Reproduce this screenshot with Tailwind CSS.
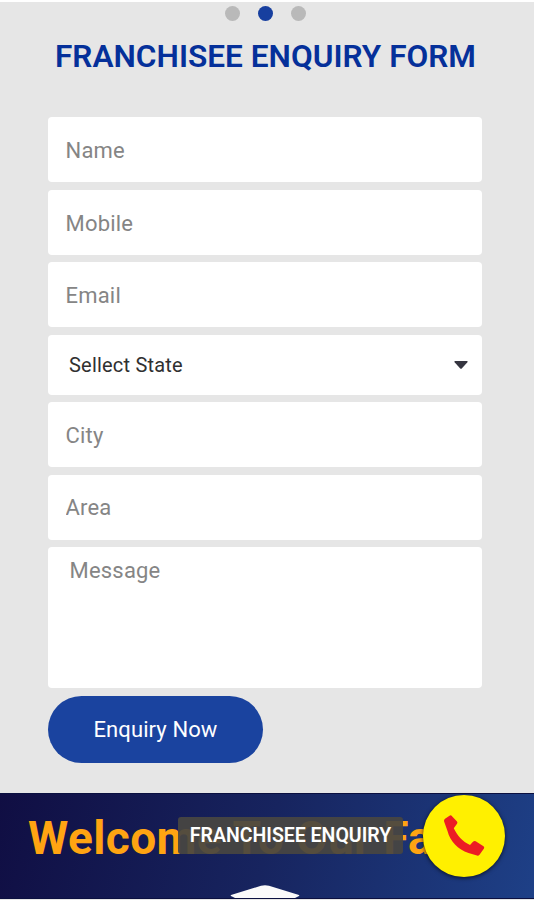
<!DOCTYPE html>
<html lang="en">
<head>
  <meta charset="UTF-8" />
  <meta name="viewport" content="width=device-width, initial-scale=1" />
  <title>Franchisee Enquiry Form</title>
  <script src="https://cdn.jsdelivr.net/npm/@tailwindcss/browser@4"></script>
</head>
<body class="bg-[#e6e6e6] font-[Roboto,sans-serif]">

<div class="relative flex flex-col h-[900px] overflow-hidden border-t-2 border-white">
  <!-- Slider dots -->
  <div class="flex justify-center gap-[18px] pt-1 pr-[3px]">
    <span class="size-[15px] rounded-full bg-[#b9b9b9]"></span>
    <span class="size-[15px] rounded-full bg-[#173f9f]"></span>
    <span class="size-[15px] rounded-full bg-[#b9b9b9]"></span>
  </div>

  <h1 class="mt-4 h-10 pr-[3px] text-center text-[31.6px] leading-10 font-semibold whitespace-nowrap text-[#05309a]">FRANCHISEE ENQUIRY FORM</h1>

  <!-- Enquiry form -->
  <form class="mt-10 ml-12 w-[434px] flex flex-col text-[22px] tracking-[0.2px]">
    <input type="text" placeholder="Name" class="h-[65px] mb-2 px-[17.5px] pt-px rounded-[4px] bg-white placeholder:text-[#858585] outline-none" />
    <input type="text" placeholder="Mobile" class="h-[65px] mb-[7px] px-[17.5px] pt-px rounded-[4px] bg-white placeholder:text-[#858585] outline-none" />
    <input type="text" placeholder="Email" class="h-[65px] mb-2 px-[17.5px] pt-px rounded-[4px] bg-white placeholder:text-[#858585] outline-none" />
    <div class="flex items-center justify-between h-[60px] mb-[7px] pl-[21px] pr-[14px] rounded-[4px] bg-white text-[20px] text-[#303030]">
      <span class="-mt-px">Sellect State</span>
      <svg class="w-[14px] h-2" viewBox="0 0 14 8"><path d="M1 0h12q1 .5.4 1.300L8 7.200q-1 1-2 0L.6 1.300Q0 .5 1 0z" fill="#353540" /></svg>
    </div>
    <input type="text" placeholder="City" class="h-[65px] mb-2 px-[17.5px] pt-px rounded-[4px] bg-white placeholder:text-[#858585] outline-none" />
    <input type="text" placeholder="Area" class="h-[65px] mb-[7px] px-[17.5px] rounded-[4px] bg-white placeholder:text-[#858585] outline-none" />
    <textarea placeholder="Message" class="h-[141px] mb-2 px-[21.5px] py-2 rounded-[4px] bg-white leading-8 placeholder:text-[#858585] outline-none resize-none"></textarea>
    <button type="button" class="w-[215px] h-[67px] rounded-full bg-[#1a439f] text-white tracking-[0.1px]">Enquiry Now</button>
  </form>

  <!-- Welcome banner -->
  <section class="relative mt-[30px] h-[106px] overflow-hidden bg-linear-[105deg] from-[#100e43] via-[#17245f] to-[#1e4087] border-y border-[#0b1040]">
    <h2 class="pl-7 pt-[16px] text-[46px] leading-[56px] tracking-[0.4px] font-bold whitespace-nowrap text-[#ffa412]">Welcome To Our Fa</h2>
    <svg class="absolute left-[230px] bottom-0 w-[70px] h-[13px]" viewBox="0 0 70 13"><path d="M1 10L31 .8q4-1.200 8 0L69 10q1 1-1 1.500L65 13H5l-3-1.500Q0 11 1 10z" fill="#fafafa" /></svg>
  </section>

  <!-- Floating call button -->
  <div class="absolute left-[178px] top-[815px] w-[225px] h-[37px] flex items-center justify-center rounded-[3px] bg-[#484642]/93 text-white text-[19.5px] font-semibold whitespace-nowrap">FRANCHISEE ENQUIRY</div>
  <div class="absolute left-[423px] top-[793px] size-[82px] rounded-full bg-[#fff000] shadow-[0_1px_4px_rgba(0,0,0,0.7)]">
    <svg class="absolute left-[20px] top-[18px] w-[42px] h-[44px]" viewBox="0 0 42 44"><path d="M6.500 2.700Q8 1.800 9 3.200l5 5.200q.9 1.100 0 2.300l-3.200 4.500C14 22 19.500 28.500 27 32l3-3.300q1.200-1.200 2.700-.4l7.800 5q1.200.9.5 2.200l-4.500 6.200q-.9 1.200-2.500.9L25.500 40C15 36.500 7 28 4.500 18L1.100 8.500Q.6 6.700 2 5.700z" fill="#ec1c24" /></svg>
  </div>
</div>

</body>
</html>
